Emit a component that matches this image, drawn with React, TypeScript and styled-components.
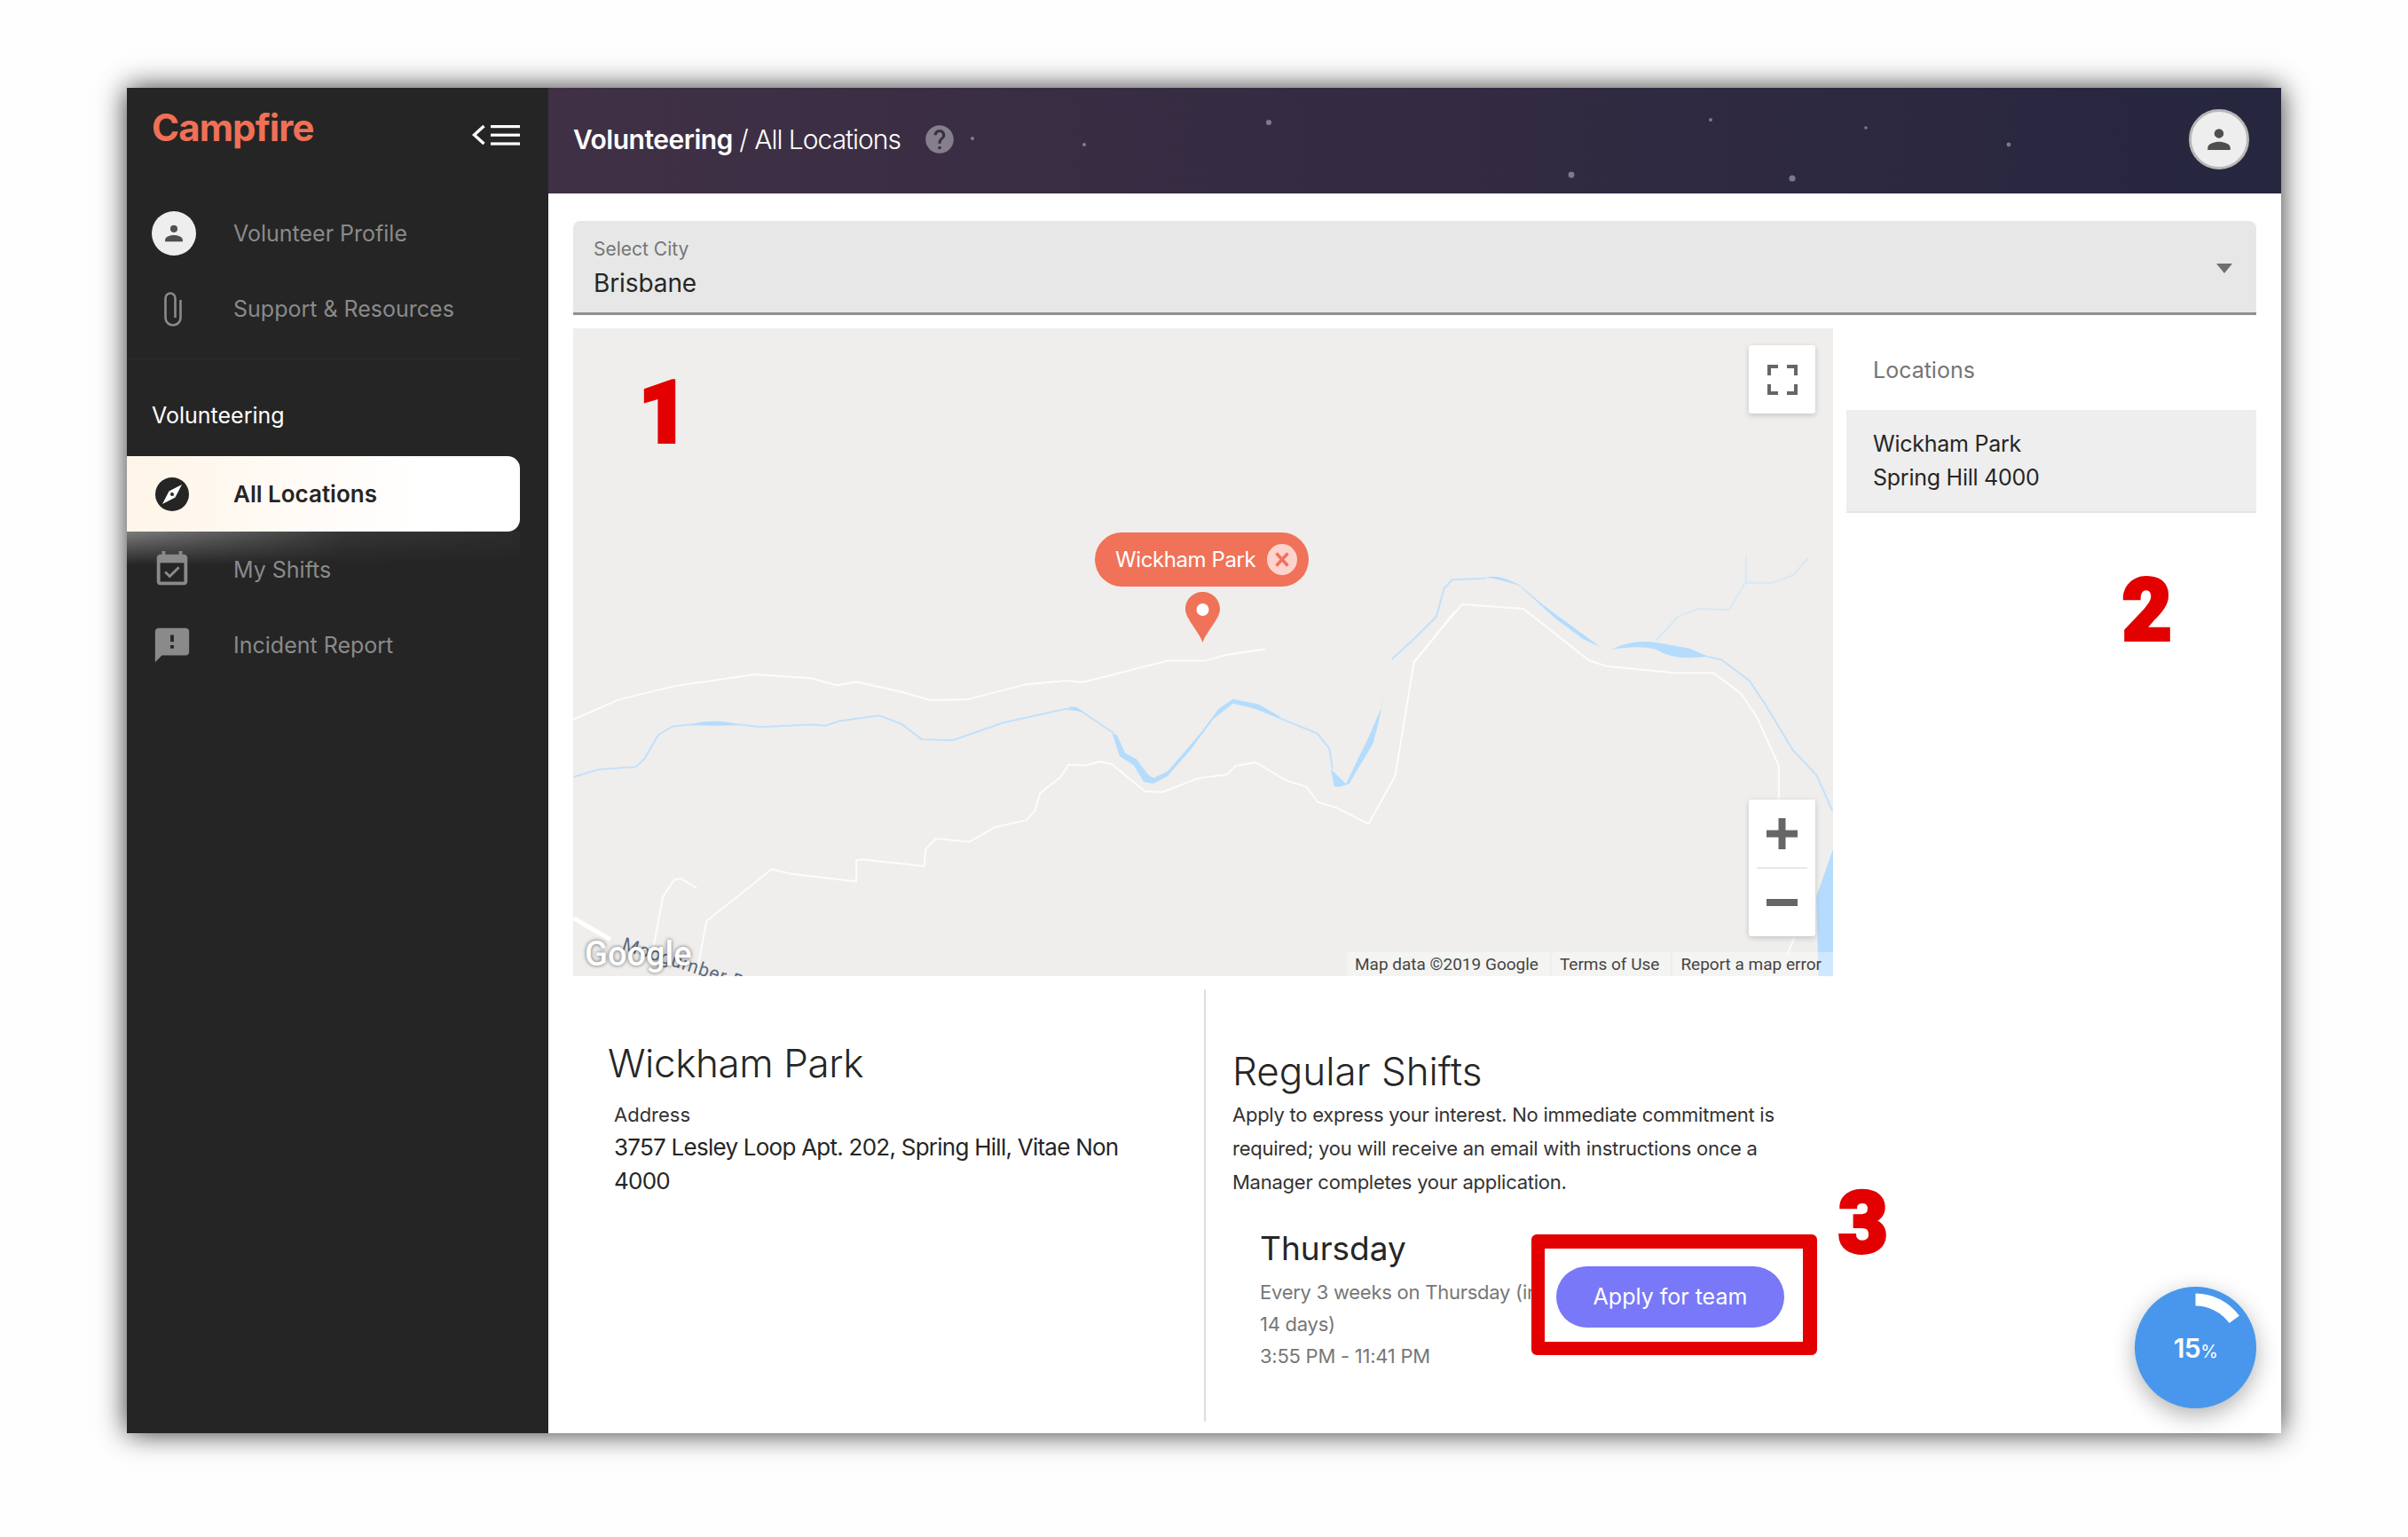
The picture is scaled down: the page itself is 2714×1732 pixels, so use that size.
import { FC } from "react";
import styled, { createGlobalStyle } from "styled-components";

const font = `Inter, "Liberation Sans", sans-serif`;

const GlobalStyle = createGlobalStyle`
  html, body {
    margin: 0;
    padding: 0;
    background: #fefefe;
    font-family: ${font};
  }
  * { box-sizing: border-box; }
`;

const App: FC = () => {
  return (
    <Page>
      <GlobalStyle />
      <Window>
        <Sidebar>
          <Brand>
            <Logo>Campfire</Logo>
            <CollapseIcon viewBox="0 0 54 24">
              <path d="M13.5 2 L2.5 12 L13.5 22" fill="none" stroke="#fff" strokeWidth="3.4" />
              <rect x="21" y="1" width="33" height="3.2" fill="#fff" />
              <rect x="21" y="10.6" width="33" height="3.2" fill="#fff" />
              <rect x="21" y="20.4" width="33" height="3.2" fill="#fff" />
            </CollapseIcon>
          </Brand>

          <NavGroup>
            <NavItem>
              <IconSlot>
                <Avatar $size={50}>
                  <PersonIcon size={28} />
                </Avatar>
              </IconSlot>
              <NavLabel>Volunteer Profile</NavLabel>
            </NavItem>
            <NavItem>
              <IconSlot>
                <Glyph width="23" height="42" viewBox="0 0 23 42">
                  <path
                    d="M14.5 31 V9 a5.5 5.5 0 0 0 -11 0 V31 a8.5 8.5 0 0 0 17 0 V11"
                    fill="none"
                    stroke="#8a8a8a"
                    strokeWidth="2.6"
                  />
                </Glyph>
              </IconSlot>
              <NavLabel>Support &amp; Resources</NavLabel>
            </NavItem>
          </NavGroup>

          <SectionTitle>Volunteering</SectionTitle>

          <NavItem $active>
            <IconSlot>
              <Glyph width="40" height="40" viewBox="0 0 40 40">
                <circle cx="20" cy="20" r="19" fill="#252525" />
                <path d="M31 9 L23.5 23.5 L16.5 16.5 Z" fill="#fff" />
                <path d="M9 31 L16.5 16.5 L23.5 23.5 Z" fill="#fff" />
                <circle cx="20" cy="20" r="2" fill="#252525" />
              </Glyph>
            </IconSlot>
            <NavLabel $active>All Locations</NavLabel>
          </NavItem>
          <NavItem>
            <IconSlot>
              <Glyph width="46" height="46" viewBox="0 0 24 24">
                <path
                  fill="#8a8a8a"
                  d="M16.53 11.06L15.47 10l-4.88 4.88-2.12-2.12-1.06 1.06L10.59 17l5.94-5.94zM19 3h-1V1h-2v2H8V1H6v2H5c-1.11 0-1.99.9-1.99 2L3 19c0 1.1.89 2 2 2h14c1.1 0 2-.9 2-2V5c0-1.1-.9-2-2-2zm0 16H5V8h14v11z"
                />
              </Glyph>
            </IconSlot>
            <NavLabel>My Shifts</NavLabel>
          </NavItem>
          <NavItem>
            <IconSlot>
              <Glyph width="46" height="46" viewBox="0 0 24 24">
                <path
                  fill="#8a8a8a"
                  d="M20 2H4c-1.1 0-1.99.9-1.99 2L2 22l4-4h14c1.1 0 2-.9 2-2V4c0-1.1-.9-2-2-2zm-7 12h-2v-2h2v2zm0-4h-2V6h2v4z"
                />
              </Glyph>
            </IconSlot>
            <NavLabel>Incident Report</NavLabel>
          </NavItem>
        </Sidebar>

        <Main>
          <Header>
            <Stars viewBox="0 0 1953 119">
              <circle cx="478" cy="57" r="2" />
              <circle cx="604" cy="64" r="2" />
              <circle cx="812" cy="39" r="3" />
              <circle cx="1153" cy="98" r="3.4" />
              <circle cx="1310" cy="36" r="2" />
              <circle cx="1402" cy="102" r="3.6" />
              <circle cx="1485" cy="45" r="1.8" />
              <circle cx="1646" cy="64" r="2.4" />
            </Stars>
            <Crumbs>
              <strong>Volunteering</strong> / All Locations
            </Crumbs>
            <HelpIcon viewBox="0 0 24 24">
              <path
                fill="#847e8d"
                d="M12 2C6.48 2 2 6.48 2 12s4.48 10 10 10 10-4.48 10-10S17.52 2 12 2zm1 17h-2v-2h2v2zm2.07-7.75l-.9.92C13.45 12.9 13 13.5 13 15h-2v-.5c0-1.1.45-2.1 1.17-2.83l1.24-1.26c.37-.36.59-.86.59-1.41 0-1.1-.9-2-2-2s-2 .9-2 2H8c0-2.21 1.79-4 4-4s4 1.79 4 4c0 .88-.36 1.68-.93 2.25z"
              />
            </HelpIcon>
            <HeaderAvatar $size={68}>
              <PersonIcon size={36} />
            </HeaderAvatar>
          </Header>

          <Content>
            <Select>
              <SelectLabel>Select City</SelectLabel>
              <SelectValue>Brisbane</SelectValue>
              <SelectArrow />
            </Select>

            <MapRow>
              <MapPanel>
                <MapDrawing />
                <GoogleMark>Google</GoogleMark>
                <MapControl $top={19} $height={77}>
                  <svg width="34" height="34" viewBox="0 0 34 34">
                    <path
                      fill="none"
                      stroke="#666"
                      strokeWidth="4"
                      d="M2 12 V2 H12 M22 2 H32 V12 M2 22 V32 H12 M22 32 H32 V22"
                    />
                  </svg>
                </MapControl>
                <MapControl $top={531} $height={154}>
                  <ZoomButton>
                    <svg width="35" height="35" viewBox="0 0 35 35">
                      <path fill="#666" d="M13.5 0h8v13.5H35v8H21.5V35h-8V21.5H0v-8h13.5z" />
                    </svg>
                  </ZoomButton>
                  <ZoomDivider />
                  <ZoomButton>
                    <svg width="35" height="8" viewBox="0 0 35 8">
                      <rect width="35" height="8" fill="#666" />
                    </svg>
                  </ZoomButton>
                </MapControl>
                <MarkerPill>
                  Wickham Park
                  <PillClose viewBox="0 0 34 35">
                    <ellipse cx="17" cy="17.5" rx="17" ry="17.5" fill="#fdd3cd" />
                    <path d="M10.5 10.5 L23.5 24.5 M23.5 10.5 L10.5 24.5" stroke="#f07259" strokeWidth="3.4" />
                  </PillClose>
                </MarkerPill>
                <MarkerPin viewBox="0 0 39 57">
                  <path d="M19.5 57 C15 44 0 30 0 19.5 C0 8 9 0 19.5 0 C30 0 39 8 39 19.5 C39 30 24 44 19.5 57Z" fill="#f07259" />
                  <circle cx="19.5" cy="20" r="7" fill="#fff" />
                </MarkerPin>
                <Attribution>
                  <AttributionItem>Map data ©2019 Google</AttributionItem>
                  <AttributionItem>Terms of Use</AttributionItem>
                  <AttributionItem>Report a map error</AttributionItem>
                </Attribution>
              </MapPanel>

              <LocationList>
                <ListTitle>Locations</ListTitle>
                <ListItem>
                  Wickham Park
                  <br />
                  Spring Hill 4000
                </ListItem>
              </LocationList>
            </MapRow>

            <Details>
              <AddressColumn>
                <AddressTitle>Wickham Park</AddressTitle>
                <AddressBody>
                  <SmallLabel>Address</SmallLabel>
                  <AddressText>3757 Lesley Loop Apt. 202, Spring Hill, Vitae Non 4000</AddressText>
                </AddressBody>
              </AddressColumn>

              <ShiftsColumn>
                <ShiftsTitle>Regular Shifts</ShiftsTitle>
                <ShiftsIntro>
                  Apply to express your interest. No immediate commitment is required; you will receive an email with
                  instructions once a Manager completes your application.
                </ShiftsIntro>
                <ShiftRow>
                  <ShiftInfo>
                    <ShiftDay>Thursday</ShiftDay>
                    <ShiftMeta>
                      Every 3 weeks on Thursday (in 14 days)
                      <br />
                      3:55 PM - 11:41 PM
                    </ShiftMeta>
                  </ShiftInfo>
                  <Highlight>
                    <ApplyButton>Apply for team</ApplyButton>
                  </Highlight>
                </ShiftRow>
              </ShiftsColumn>
            </Details>
          </Content>

          <Callout $left={102} $top={318}>1</Callout>
          <Callout $left={1774} $top={541}>2</Callout>
          <Callout $left={1454} $top={1231}>3</Callout>

          <Progress>
            <svg width="137" height="137" viewBox="0 0 137 137">
              <path d="M68.5 14.5 A54 54 0 0 1 112.2 36.8" fill="none" stroke="#fff" strokeWidth="14" />
            </svg>
            <ProgressText>
              15<small>%</small>
            </ProgressText>
          </Progress>
        </Main>
      </Window>
    </Page>
  );
};

const PersonIcon: FC<{ size: number }> = ({ size }) => (
  <svg width={size} height={size} viewBox="0 0 24 24">
    <circle cx="12" cy="7.6" r="3.5" fill="#4f4f4f" />
    <path d="M3.5 20v-1.6c0-3.2 5.2-4.6 8.5-4.6s8.5 1.4 8.5 4.6V20z" fill="#4f4f4f" />
  </svg>
);

const MapDrawing: FC = () => (
  <MapSvg viewBox="646 370 1420 730">
    <defs>
      <clipPath id="map-clip">
        <rect x="646" y="370" width="1420" height="730" />
      </clipPath>
    </defs>
    <g clipPath="url(#map-clip)">
      {/* left half of the map, traced in crop coordinates */}
      <g transform="translate(640 580) scale(0.6378 0.3444)">
        <Road d="M10 670 L90 605 L190 560 L330 523 L430 535 L475 558 L510 547 L590 580 L640 607 L705 605 L810 555 L880 543 L910 548 L1060 478 L1125 478 L1165 458 L1232 440" />
        <Road d="M228 1500 L245 1330 L360 1160 L395 1175 L510 1200 L510 1130 L520 1128 L630 1150 L632 1095 L650 1060 L710 1070 L755 1022 L810 1000 L825 970 L835 910 L870 860 L885 818 L915 820 L940 808 L960 815 L1020 905 L1050 908 L1115 862 L1165 850 L1180 822 L1215 810 L1270 870 L1305 890 L1325 940 L1360 960 L1415 1012 L1462 855 L1495 485 L1568 315" />
        <Road d="M150 1430 L168 1250 L188 1195 L200 1190 L228 1222" />
        <path d="M10 1320 L75 1390" stroke="#fff" strokeWidth="5" fill="none" vectorEffect="non-scaling-stroke" />
        <River d="M10 858 L55 833 L120 825 L135 800 L160 720 L185 693 L215 687 L305 687 L340 695 L430 687 L455 690 L480 675 L550 657 L590 685 L625 735 L680 738 L770 680 L880 635 L905 640 L965 715" />
        <Water d="M215 687 Q255 664 305 687 Q255 692 215 687Z" />
        <Water d="M884 628 L900 630 L912 648 L888 636Z" />
        <Water d="M962 715 L975 790 L1000 820 L1018 875 L1035 880 L1060 855 L1100 770 L1140 670 L1175 618 L1215 635 L1258 668 L1258 660 L1220 620 L1175 603 L1150 635 L1120 710 L1060 840 L1035 862 L1025 850 L1005 800 L985 780 L970 720Z" />
      </g>
      {/* right half of the map */}
      <g transform="translate(1400 600) scale(0.4464 0.3333)">
        <Road d="M432 440 L555 243 L710 258 L875 432 L920 452 L1090 475 L1190 475 L1260 545 L1300 625 L1355 790 L1355 900" />
        <Road d="M1395 1370 L1375 1430" />
        <River d="M378 428 L430 365 L490 285 L510 190 L530 160 L615 155" />
        <River d="M90 625 L190 680 L220 730 L228 800" />
        <River d="M1175 420 L1210 430 L1280 500 L1320 580 L1390 735 L1450 820 L1490 940" />
        <River d="M1045 365 L1100 285 L1150 258 L1230 262 L1270 170 L1340 170 L1390 145 L1430 85 M1272 170 L1272 80" $faint />
        <Water d="M0 572 L40 585 L95 625 L40 600 L0 582Z" />
        <Water d="M615 152 Q650 140 700 178 L760 245 L905 388 L860 360 L790 290 L700 180 Q660 160 615 152Z" />
        <Water d="M932 396 Q985 360 1045 372 L1130 392 L1178 420 L1130 424 Q1080 425 1045 395 Q1000 380 932 396Z" />
        <Water d="M365 488 L345 640 L330 715 L270 850 L245 860 L232 858 L224 800 L262 850 L320 690 L352 590Z" />
        <Water d="M1492 1070 L1450 1230 L1455 1500 L1492 1500Z" />
      </g>
      <StreetLabel x="700" y="1070" transform="rotate(18 700 1070)">
        Moogumber Rd
      </StreetLabel>
    </g>
  </MapSvg>
);

const Page = styled.div`
  width: 2714px;
  height: 1732px;
  padding: 99px 143px 117px;
  overflow: hidden;
`;
const Window = styled.div`
  width: 2428px;
  height: 1516px;
  display: flex;
  background: #fff;
  box-shadow: 0 0 30px rgba(0, 0, 0, 0.8);
`;
const Sidebar = styled.aside`
  width: 475px;
  flex: none;
  padding-top: 12px;
  background: #252525;
`;
const Brand = styled.div`
  width: 443px;
  height: 73px;
  padding: 8px 0 0 28px;
  display: flex;
  justify-content: space-between;
  align-items: flex-start;
`;
const Logo = styled.div`
  font-size: 42px;
  line-height: 50px;
  font-weight: 700;
  letter-spacing: -0.9px;
  color: #f07056;
`;
const CollapseIcon = styled.svg`
  width: 54px;
  height: 24px;
  margin-top: 21px;
`;
const NavGroup = styled.div`
  width: 443px;
  height: 221px;
  padding-top: 36px;
  border-bottom: 1px solid #2d2d2d;
`;
const NavItem = styled.div<{ $active?: boolean }>`
  position: relative;
  width: 443px;
  height: 85px;
  padding-left: 28px;
  display: flex;
  align-items: center;
  border-radius: 0 14px 14px 0;
  background: ${(p) => (p.$active ? "linear-gradient(90deg, #fff5e8, #fff 75%)" : "transparent")};

  ${(p) =>
    p.$active &&
    `
    &::after {
      content: "";
      position: absolute;
      top: 100%;
      left: 0;
      right: 0;
      height: 38px;
      background: linear-gradient(180deg, rgba(255, 255, 255, 0.4), rgba(255, 255, 255, 0));
      -webkit-mask-image: linear-gradient(90deg, #000, rgba(0, 0, 0, 0.2) 55%, rgba(0, 0, 0, 0.08));
      mask-image: linear-gradient(90deg, #000, rgba(0, 0, 0, 0.2) 55%, rgba(0, 0, 0, 0.08));
    }
  `}
`;
const IconSlot = styled.div`
  width: 50px;
  margin-right: 42px;
  flex: none;
  display: flex;
  justify-content: center;
  align-items: center;
`;
const Glyph = styled.svg`
  margin-right: 4px;
  flex: none;
`;
const NavLabel = styled.span<{ $active?: boolean }>`
  font-size: ${(p) => (p.$active ? 26 : 25)}px;
  font-weight: ${(p) => (p.$active ? 600 : 400)};
  color: ${(p) => (p.$active ? "#252525" : "#8a8a8a")};
`;
const SectionTitle = styled.div`
  height: 109px;
  padding: 44px 0 0 28px;
  font-size: 25px;
  line-height: 38px;
  color: #fff;
`;
const Avatar = styled.div<{ $size: number }>`
  width: ${(p) => p.$size}px;
  height: ${(p) => p.$size}px;
  flex: none;
  display: flex;
  justify-content: center;
  align-items: center;
  border-radius: 50%;
  background: #eeeeee;
`;
const Main = styled.main`
  position: relative;
  flex: 1;
  min-width: 0;
`;
const Header = styled.header`
  position: relative;
  height: 119px;
  padding: 0 36px 4px 28px;
  display: flex;
  align-items: center;
  background: linear-gradient(90deg, #403045, #26263f);
`;
const Stars = styled.svg`
  position: absolute;
  top: 0;
  left: 0;
  width: 100%;
  height: 100%;
  fill: rgba(255, 255, 255, 0.38);
`;
const Crumbs = styled.div`
  position: relative;
  font-size: 30px;
  letter-spacing: -1px;
  color: #fff;
  font-weight: 300;

  strong {
    font-weight: 600;
    letter-spacing: -0.5px;
  }
`;
const HelpIcon = styled.svg`
  position: relative;
  width: 38px;
  height: 38px;
  margin-left: 25px;
`;
const HeaderAvatar = styled(Avatar)`
  position: relative;
  margin-left: auto;
  border: 3px solid #b8b8b8;
`;
const Content = styled.div`
  padding: 31px 28px 0;
`;
const Select = styled.div`
  position: relative;
  height: 106px;
  padding: 18px 23px 0;
  border-radius: 8px 8px 0 0;
  border-bottom: 3px solid #8f8f8f;
  background: #e7e7e7;
`;
const SelectLabel = styled.div`
  font-size: 21px;
  line-height: 28px;
  color: #767676;
`;
const SelectValue = styled.div`
  margin-top: 4px;
  font-size: 28px;
  line-height: 40px;
  letter-spacing: -0.1px;
  color: #262626;
`;
const SelectArrow = styled.div`
  position: absolute;
  top: 48px;
  right: 27px;
  border-left: 9.5px solid transparent;
  border-right: 9.5px solid transparent;
  border-top: 11px solid #6f6f6f;
`;
const MapRow = styled.div`
  margin-top: 15px;
  display: flex;
  gap: 15px;
`;
const MapPanel = styled.div`
  position: relative;
  width: 1420px;
  height: 730px;
  flex: none;
  overflow: hidden;
  background: #efeeec;
`;
const MapSvg = styled.svg`
  display: block;
  width: 1420px;
  height: 730px;
`;
const Road = styled.path.attrs({ vectorEffect: "non-scaling-stroke" })`
  fill: none;
  stroke: #fcfcfb;
  stroke-width: 2px;
`;
const River = styled.path.attrs({ vectorEffect: "non-scaling-stroke" })<{ $faint?: boolean }>`
  fill: none;
  stroke: ${(p) => (p.$faint ? "#d8e8f4" : "#c3e0fb")};
  stroke-width: 2px;
`;
const Water = styled.path`
  fill: #b5dcfd;
`;
const StreetLabel = styled.text`
  font-family: Roboto, sans-serif;
  font-size: 21px;
  letter-spacing: 1px;
  fill: #5b6b7c;
`;
const GoogleMark = styled.div`
  position: absolute;
  left: 13px;
  bottom: 3px;
  font-family: Roboto, sans-serif;
  font-size: 38px;
  font-weight: 500;
  color: #fff;
  text-shadow: 0 0 4px rgba(0, 0, 0, 0.6);
`;
const MapControl = styled.div<{ $top: number; $height: number }>`
  position: absolute;
  top: ${(p) => p.$top}px;
  right: 20px;
  width: 75px;
  height: ${(p) => p.$height}px;
  display: flex;
  flex-direction: column;
  justify-content: center;
  align-items: center;
  border-radius: 3px;
  background: #fff;
  box-shadow: 0 2px 6px rgba(0, 0, 0, 0.18);
`;
const ZoomButton = styled.div`
  flex: 1;
  display: flex;
  align-items: center;
  justify-content: center;
`;
const ZoomDivider = styled.div`
  width: 57px;
  height: 2px;
  background: #e8e8e8;
`;
const MarkerPill = styled.div`
  position: absolute;
  top: 230px;
  left: 588px;
  width: 241px;
  height: 61px;
  padding: 0 13px 0 23px;
  display: flex;
  align-items: center;
  justify-content: space-between;
  border-radius: 31px;
  background: #f07259;
  font-size: 24px;
  letter-spacing: -0.4px;
  color: #fff;
`;
const PillClose = styled.svg`
  width: 34px;
  height: 35px;
  flex: none;
`;
const MarkerPin = styled.svg`
  position: absolute;
  top: 297px;
  left: 690px;
  width: 39px;
  height: 57px;
`;
const Attribution = styled.div`
  position: absolute;
  right: 0;
  bottom: 0;
  height: 27px;
  display: flex;
  gap: 2px;
`;
const AttributionItem = styled.span`
  padding: 0 13px 0 9px;
  font-family: Roboto, sans-serif;
  font-size: 19px;
  line-height: 27px;
  color: #444;
  background: rgba(255, 255, 255, 0.35);
`;
const LocationList = styled.div`
  flex: 1;
`;
const ListTitle = styled.div`
  height: 92px;
  padding: 30px 0 0 30px;
  font-size: 25px;
  line-height: 34px;
  color: #757575;
`;
const ListItem = styled.div`
  height: 116px;
  padding: 19px 30px 0;
  border-bottom: 2px solid #e4e4e4;
  background: #eeeeee;
  font-size: 25px;
  line-height: 38px;
  letter-spacing: -0.25px;
  color: #262626;
`;
const Details = styled.div`
  margin-top: 15px;
  display: flex;
  height: 487px;
`;
const AddressColumn = styled.section`
  width: 713px;
  flex: none;
  padding: 56px 40px 0 39px;
  border-right: 2px solid #dedede;
`;
const AddressTitle = styled.h2`
  margin: 0;
  font-size: 44px;
  line-height: 54px;
  font-weight: 300;
  letter-spacing: -0.4px;
  color: #262626;
`;
const AddressBody = styled.div`
  margin-top: 13px;
  padding-left: 7px;
`;
const SmallLabel = styled.div`
  font-size: 22px;
  line-height: 36px;
  color: #333;
`;
const AddressText = styled.div`
  width: 580px;
  font-size: 26px;
  line-height: 38px;
  letter-spacing: -0.75px;
  color: #262626;
`;
const ShiftsColumn = styled.section`
  flex: 1;
  padding: 65px 0 0 30px;
`;
const ShiftsTitle = styled.h2`
  margin: 0;
  font-size: 44px;
  line-height: 54px;
  font-weight: 300;
  color: #262626;
`;
const ShiftsIntro = styled.p`
  width: 640px;
  margin: 3px 0 0;
  font-size: 22px;
  line-height: 38px;
  letter-spacing: -0.25px;
  color: #333;
`;
const ShiftRow = styled.div`
  margin-top: 33px;
  padding-left: 31px;
  display: flex;
  align-items: flex-start;
`;
const ShiftInfo = styled.div`
  width: 306px;
  flex: none;
`;
const ShiftDay = styled.div`
  font-size: 37px;
  line-height: 46px;
  font-weight: 400;
  color: #262626;
`;
const ShiftMeta = styled.div`
  width: 340px;
  margin-top: 8px;
  font-size: 22px;
  line-height: 36px;
  letter-spacing: -0.25px;
  color: #777;
`;
const Highlight = styled.div`
  position: relative;
  width: 322px;
  height: 136px;
  margin-top: 7px;
  flex: none;
  padding: 3px 0 0 13px;
  display: flex;
  align-items: center;
  border: solid #e20000;
  border-width: 16px 16px 15px 15px;
  border-radius: 6px;
  background: #fff;
`;
const ApplyButton = styled.button`
  width: 257px;
  height: 69px;
  padding: 0;
  border: 0;
  border-radius: 35px;
  background: #7878f8;
  font-family: ${font};
  font-size: 25px;
  color: #fff;
`;
const Callout = styled.div<{ $left: number; $top: number }>`
  position: absolute;
  left: ${(p) => p.$left}px;
  top: ${(p) => p.$top}px;
  font-family: Roboto, "Liberation Sans", sans-serif;
  font-size: 96px;
  line-height: 96px;
  font-weight: 900;
  color: #e20000;
  -webkit-text-stroke: 4px #e20000;
`;
const Progress = styled.div`
  position: absolute;
  right: 28px;
  bottom: 28px;
  width: 137px;
  height: 137px;
  border-radius: 50%;
  background: #4897ec;
  box-shadow: 0 8px 26px rgba(0, 0, 0, 0.3);

  svg {
    display: block;
  }
`;
const ProgressText = styled.div`
  position: absolute;
  top: 50%;
  left: 0;
  width: 100%;
  margin-top: -20px;
  text-align: center;
  font-size: 30px;
  line-height: 40px;
  font-weight: 600;
  letter-spacing: -0.5px;
  color: #fff;

  small {
    font-size: 20px;
    font-weight: 400;
  }
`;

export default App;
